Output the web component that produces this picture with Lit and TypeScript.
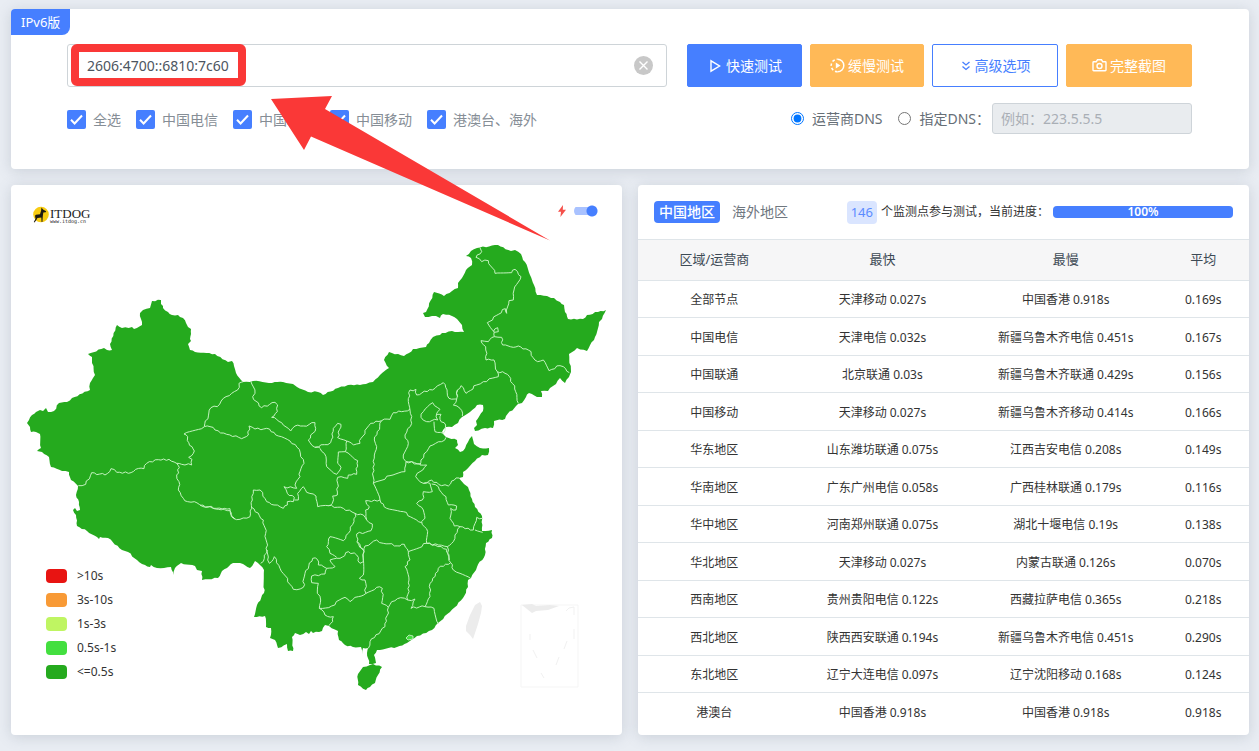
import { LitElement, html, css, svg } from "lit";
import { customElement } from "lit/decorators.js";

const COAST =
  "27,423 29,420 32,415 36,412 40,410 43,411 46,408 48,412 54,411 59,403 67,402 72,398 90,390 90,383 93,378 95,375 92,360 92,357 88,354 104,348 107,350 112,350 110,344 117,325 122,328 132,327 134,329 142,325 140,313 143,310 150,308 152,301 161,300 161,304 163,306 163,308 168,312 172,315 178,315 180,317 183,318 186,323 188,327 191,329 191,334 190,339 191,341 188,344 190,350 195,352 215,354 228,362 232,361 234,366 236,373 243,382 253,381 272,383 283,382 293,384 297,387 308,392 318,392 323,395 338,388 348,385 366,384 373,382 380,375 389,368 384,360 389,352 404,356 409,353 413,349 426,347 429,343 433,337 440,335 442,333 452,331 458,332 464,332 462,325 457,319 452,316 443,314 440,318 436,316 432,316 425,317 423,313 426,312 434,292 444,296 452,291 458,288 458,283 462,278 466,270 472,265 471,258 466,256 471,251 477,248 498,245 511,251 515,250 521,254 523,260 525,262 530,275 534,285 537,295 547,296 551,298 554,298 560,302 564,305 565,312 568,319 583,319 587,315 598,312 606,310 602,319 599,322 595,337 587,351 577,348 569,354 571,372 569,377 565,383 560,378 556,384 550,388 548,391 541,391 542,397 537,397 529,393 526,397 522,403 518,404 506,416 505,419 494,421 493,428 485,428 475,431 474,428 477,425 476,421 483,411 483,405 477,405 470,412 462,417 458,423 452,427 446,427 442,432 446,437 457,440 458,445 455,448 460,452 463,451 468,442 472,436 474,444 480,448 489,448 488,455 482,455 475,461 463,472 463,477 459,478 464,484 468,487 472,499 475,507 482,516 482,531 492,530 492,538 486,543 485,555 477,567 471,578 468,580 468,587 463,598 450,612 438,623 432,630 417,636 407,643 397,647 377,650 374,655 376,663 369,664 367,653 368,648 363,648 362,654 361,647 353,647 345,645 339,640 338,631 329,626 325,625 322,631 313,633 311,631 309,634 306,632 300,635 295,633 292,637 293,651 288,651 287,644 278,648 275,640 270,638 271,628 266,627 265,616 254,617 257,605 264,593 264,570 260,565 255,561 250,568 243,564 240,563 233,563 227,568 222,571 218,578 202,580 202,571 197,570 195,566 181,563 175,568 173,575 171,567 164,568 157,568 151,565 150,567 145,565 142,564 137,560 128,552 122,550 108,538 100,537 99,539 87,531 77,526 76,515 73,510 75,508 77,511 80,510 79,502 76,495 78,486 71,480 69,472 62,471 51,467 49,457 42,452 37,451 41,448 40,434 36,432 31,432 30,427";

const HAINAN = "363,667 370,665 373,664 382,667 378,675 375,683 370,687 366,690 358,685 358,674";

/** Province borders, digitised per map sheet at three units to the pixel. */
const SHEETS: { x: number; y: number; lines: string[] }[] = [
  {
    x: 0, y: 370,
    lines: [
      "235,347 257,343 275,308 315,315 333,296 350,307 385,310 407,298 432,296 440,280 475,269 507,268 530,280 545,283 575,285 576,268 566,262 583,243 576,230 562,212 563,200 552,192 612,171",
      "530,280 538,293 530,315 537,335 535,360 550,385 563,395 583,395 605,408 630,410 655,418 690,416 698,440 705,447",
    ],
  },
  {
    x: 200, y: 360,
    lines: [
      "130,65 117,70 118,82 95,100 70,115 52,140 33,143 13,200",
      "152,63 165,100 158,110 185,143 225,127 233,135 232,155 215,172 245,188 272,213 285,198 310,198 345,188 347,205 325,240 345,262 360,262",
      "345,262 392,248 400,205 413,190 423,193 413,233 440,243 436,275 415,276 413,310 423,322 410,343 380,320 378,290 360,265",
      "436,275 473,302 470,343 445,345 443,355 413,352 412,405 398,408 397,430 385,437",
      "440,243 460,255 480,250 483,235 512,190 545,182 523,240 530,260 523,285 520,370",
      "545,182 570,178 580,158 605,155 630,148",
      "13,200 30,200 45,210 80,223 125,236 145,225 147,198 165,207 200,205 235,228 270,243 298,268 302,290 312,310 300,335 300,350 285,375 290,385 252,380 262,400 283,412 280,425 262,425",
      "283,420 295,420 293,400 310,380 320,397 348,408 353,440 385,437",
      "262,425 262,435 250,445 222,435 200,425 180,390 160,390 157,420 155,445 150,470 120,478 100,475 90,452 50,445 0,436",
      "385,437 430,445 465,460 490,465 500,480 497,450 508,440 497,422 540,420",
      "465,460 462,485 445,520 430,542 390,530 380,560 390,580 410,592",
      "520,370 570,347 615,335 618,305 660,312",
      "520,370 540,420 560,445 610,455 640,475 665,488",
      "500,480 517,492 513,512 470,522 472,545 490,570",
    ],
  },
  {
    x: 380, y: 230,
    lines: [
      "300,53 305,65 288,82 305,95 325,92 345,130 395,128 405,118 423,140 402,180 400,210 387,212 380,250 376,236 322,278 343,305 343,320",
      "340,305 353,293 355,305 343,307",
      "343,320 365,322 368,345 400,352 415,348 445,360 473,395 490,390 507,422 540,407 550,410 568,428",
      "343,320 325,335 303,332 317,350 318,390 342,390 352,425 375,430 392,445 407,485 415,520",
      "352,425 355,440 310,455 290,465 258,490 243,467 232,480 233,500",
    ],
  },
  {
    x: 360, y: 380,
    lines: [
      "150,90 145,65 150,30 168,28 170,45 225,25 250,8 257,22 267,55 290,57 293,30",
      "290,57 280,75 300,85 307,108",
      "150,90 155,130 135,165 145,190 130,235 138,245 180,252",
      "218,68 240,88 230,100 233,120 200,125 183,112 190,95 218,68",
      "230,103 243,103 240,118 257,135 250,160 225,155 222,125",
      "258,172 245,185 210,198 200,215 183,240 180,255 200,255 180,275 167,290 190,310",
      "190,310 215,300 245,317 265,318 275,303 297,294",
      "190,310 210,310 217,335 190,335 187,360 170,370 190,390 195,415 185,425 203,455 200,490 235,495 262,500 268,540",
      "215,312 235,320 258,350 265,375 290,378 288,390 272,385 270,415 283,438 300,440 340,450 350,412 368,415",
      "345,450 368,457",
      "300,440 285,465 280,485 262,500",
    ],
  },
  {
    x: 230, y: 500,
    lines: [
      "65,22 100,60 107,100 113,180 118,190 133,170 150,205 190,268 220,262 225,220 248,175 262,178 265,195 290,205",
      "112,150 103,175 92,190",
      "290,205 285,222 245,228 245,248 265,250 262,280 272,300 268,325",
      "290,205 315,200 300,180 330,175 355,155 380,165 390,190 400,185 402,155 380,125",
      "268,325 305,318 345,292 360,305 385,290 408,280 440,262 457,265 455,310 475,322",
      "268,325 285,345 310,350 308,365 297,377",
      "402,155 400,225 388,235 405,240 408,280",
      "402,155 405,138 440,120 460,130 510,138 523,133 535,155 590,130",
      "475,322 485,305 512,293 533,300 555,297 543,325 585,320 612,325 625,372",
      "535,155 540,180 525,200 537,240 533,300",
      "585,320 600,290 600,250 625,205 662,188 650,148",
      "590,130 615,135 650,148",
      "662,188 670,210 690,220 722,235",
      "475,322 465,380 420,425 415,445",
    ],
  },
];

/** Breaks long segments into short ones with a slight, repeatable wander. */
function meander(line: string, step: number, swing: number): string {
  const pts = line.split(" ").map((p) => p.split(",").map(Number));
  const out: string[] = [pts[0].join(",")];
  for (let i = 1; i < pts.length; i++) {
    const [ax, ay] = pts[i - 1];
    const [bx, by] = pts[i];
    const len = Math.hypot(bx - ax, by - ay);
    const n = Math.max(1, Math.round(len / step));
    for (let k = 1; k < n; k++) {
      const seed = Math.sin(ax * 12.9 + by * 78.2 + k * 37.7) * 43758.5;
      const off = (seed - Math.floor(seed) - 0.5) * swing;
      const t = k / n;
      const x = ax + (bx - ax) * t - ((by - ay) / len) * off;
      const y = ay + (by - ay) * t + ((bx - ax) / len) * off;
      out.push(`${x.toFixed(1)},${y.toFixed(1)}`);
    }
    out.push(`${bx},${by}`);
  }
  return out.join(" ");
}

const ISPS = ["全选", "中国电信", "中国联通", "中国移动", "港澳台、海外"];

const LEGEND = [
  ["red", ">10s"],
  ["orange", "3s-10s"],
  ["lime", "1s-3s"],
  ["light", "0.5s-1s"],
  ["green", "<=0.5s"],
];

const ROWS = [
  ["全部节点", "天津移动 0.027s", "中国香港 0.918s", "0.169s"],
  ["中国电信", "天津电信 0.032s", "新疆乌鲁木齐电信 0.451s", "0.167s"],
  ["中国联通", "北京联通 0.03s", "新疆乌鲁木齐联通 0.429s", "0.156s"],
  ["中国移动", "天津移动 0.027s", "新疆乌鲁木齐移动 0.414s", "0.166s"],
  ["华东地区", "山东潍坊联通 0.075s", "江西吉安电信 0.208s", "0.149s"],
  ["华南地区", "广东广州电信 0.058s", "广西桂林联通 0.179s", "0.116s"],
  ["华中地区", "河南郑州联通 0.075s", "湖北十堰电信 0.19s", "0.138s"],
  ["华北地区", "天津移动 0.027s", "内蒙古联通 0.126s", "0.070s"],
  ["西南地区", "贵州贵阳电信 0.122s", "西藏拉萨电信 0.365s", "0.218s"],
  ["西北地区", "陕西西安联通 0.194s", "新疆乌鲁木齐电信 0.451s", "0.290s"],
  ["东北地区", "辽宁大连电信 0.097s", "辽宁沈阳移动 0.168s", "0.124s"],
  ["港澳台", "中国香港 0.918s", "中国香港 0.918s", "0.918s"],
];

@customElement("app-root")
export class AppRoot extends LitElement {
  static styles = css`
    * { box-sizing: border-box; }
    :host {
      display: block;
      position: relative;
      min-height: 100vh;
      overflow: hidden;
      padding: 9px 10px 16px 11px;
      background: #e9edf3;
      color: #333;
      font-family: "Noto Sans", "Noto Sans CJK SC", sans-serif;
      font-size: 14px;
      line-height: 20px;
    }
    button, input { font: inherit; margin: 0; }
    .card {
      position: relative;
      min-width: 0;
      background: #fff;
      border-radius: 4px;
      box-shadow: 0 2px 14px rgba(90, 105, 125, 0.22);
    }
    .query { padding: 35px 57px 35px 56px; margin-bottom: 16px; }
    .version {
      position: absolute;
      left: 0;
      top: 0;
      padding: 3px 10px;
      background: #467fff;
      color: #fff;
      font-size: 13px;
      border-radius: 4px 0 8px 0;
    }
    .form {
      display: grid;
      grid-template-columns: 600fr 505fr;
      column-gap: 20px;
      row-gap: 16px;
      align-items: center;
    }
    .host-field { position: relative; display: flex; }
    .host-input {
      width: 100%;
      height: 43px;
      padding: 0 50px 0 19px;
      border: 1px solid #ced4d8;
      border-radius: 3px;
      color: #4c5560;
      outline: none;
    }
    .clear {
      position: absolute;
      right: 14px;
      top: 12px;
      width: 19px;
      height: 19px;
      padding: 0;
      border: 0;
      background: none;
    }
    .clear svg { display: block; }
    .mark-box {
      position: absolute;
      left: 4px;
      top: 0;
      width: 175px;
      height: 42px;
      border: 8px solid #fa3837;
      border-radius: 6px;
      pointer-events: none;
    }
    .actions { display: grid; grid-template-columns: 115fr 114fr 126fr 126fr; gap: 8px; }
    .btn {
      display: flex;
      align-items: center;
      justify-content: center;
      gap: 3px;
      height: 43px;
      padding: 0;
      border: 1px solid #467fff;
      border-radius: 2px;
      background: #467fff;
      color: #fff;
      white-space: nowrap;
    }
    .amber { background: #ffb957; border-color: #ffb957; }
    .outline { background: #fff; color: #467fff; }
    .checks, .dns { display: flex; align-items: center; }
    .checks { gap: 15px; padding-top: 2px; }
    .check { display: flex; align-items: center; gap: 7px; color: #868e96; white-space: nowrap; }
    .check input {
      appearance: none;
      width: 19px;
      height: 19px;
      border-radius: 2px;
      background: #467fff url("data:image/svg+xml,%3Csvg xmlns='http://www.w3.org/2000/svg' viewBox='0 0 19 19'%3E%3Cpath d='M4 9.8l3.6 3.7L15 5.5' fill='none' stroke='white' stroke-width='2'/%3E%3C/svg%3E");
    }
    .dns { justify-content: flex-end; gap: 16px; color: #666e76; }
    .dns-choice { display: flex; align-items: center; gap: 8px; white-space: nowrap; }
    .dns-choice input { width: 13px; height: 13px; }
    .dns-custom { display: flex; align-items: center; gap: 2px; }
    .dns-input {
      width: 200px;
      height: 31px;
      padding: 0 8px;
      border: 1px solid #ced4d9;
      border-radius: 3px;
      background: #e9ecef;
    }
    .dns-input::placeholder { color: #a9afb6; opacity: 1; }
    .panels { display: grid; grid-template-columns: 1fr 1fr; gap: 16px; }
    .map { display: block; width: 100%; height: auto; }
    .brand { position: absolute; left: 22px; top: 21px; display: flex; gap: 1px; color: #222; }
    .brand-text {
      display: flex;
      flex-direction: column;
      padding-top: 2px;
      font: 13px/11px "Liberation Serif", serif;
    }
    .brand-url { font: 5px/5px "DejaVu Sans Mono", monospace; }
    .speed { position: absolute; right: 23px; top: 20px; display: flex; align-items: center; gap: 8px; }
    .switch {
      appearance: none;
      width: 25px;
      height: 12px;
      background:
        radial-gradient(circle at 18px 6px, #467fff 5px, transparent 6px),
        linear-gradient(#a9c2ff, #a9c2ff) 0 2px / 22px 8px no-repeat;
      border-radius: 6px;
    }
    .legend {
      position: absolute;
      left: 35px;
      bottom: 51px;
      margin: 0;
      padding: 0;
      list-style: none;
      font-size: 12px;
      line-height: 24px;
    }
    .legend li { display: flex; align-items: center; gap: 10px; }
    .swatch { width: 21px; height: 14px; border-radius: 4px; }
    .red { background: #e81412; }
    .orange { background: #f89a36; }
    .lime { background: #bff562; }
    .light { background: #43df3f; }
    .green { background: #25aa1e; }
    .toolbar { display: flex; align-items: center; height: 54px; padding: 0 16px; font-size: 12px; white-space: nowrap; }
    .tab {
      height: 22px;
      margin-right: 7px;
      padding: 0 5px;
      border: 0;
      border-radius: 4px;
      background: none;
      color: #6f777f;
      font-size: 14px;
      line-height: 20px;
    }
    .active { background: #467fff; color: #fff; font-weight: 500; }
    .count {
      margin: 0 4px 0 auto;
      padding: 1px 4px 2px;
      border-radius: 4px;
      background: #dae5ff;
      color: #5a8bff;
      font-size: 13px;
    }
    .track { width: 180px; margin-left: 4px; border-radius: 4px; background: #e9ecef; }
    .fill {
      height: 12px;
      border-radius: 4px;
      background: #467fff;
      color: #fff;
      font-weight: 600;
      line-height: 12px;
      text-align: center;
    }
    table { width: 100%; table-layout: fixed; border-collapse: separate; border-spacing: 0; text-align: center; }
    th {
      height: 42px;
      padding: 0 0 2px;
      border: solid #dfe5e9;
      border-width: 1px 0;
      background: #f6f6f7;
      color: #3d4a55;
      font-size: 13px;
      font-weight: 400;
    }
    td { height: 37px; padding: 2px 0 0; border-bottom: 1px solid #dfe5e9; font-size: 12px; white-space: nowrap; }
    tr:nth-child(even) td { height: 38px; }
    tr:last-child td { border-bottom: 0; }
    .c1 { width: 25%; }
    .c2 { width: 30%; }
    .c3 { width: 30%; }
    .c4 { width: 15%; }
    .arrow { position: absolute; left: 271px; top: 96px; pointer-events: none; }
  `;

  private renderMap() {
    return svg`<svg class="map" viewBox="11 185 611 550" role="img" aria-label="中国地图">
      <polygon points=${meander(COAST, 3, 1.4)} fill="#25aa1e"></polygon>
      <polygon points=${meander(HAINAN, 3, 1.4)} fill="#25aa1e"></polygon>
      ${SHEETS.map(
        (s) => svg`<g transform="translate(${s.x} ${s.y}) scale(.33333)" fill="none"
          stroke="#c4f3c0" stroke-width="3" stroke-linejoin="round">
          ${s.lines.map((l) => svg`<polyline points=${meander(l, 9, 7)}></polyline>`)}
        </g>`
      )}
      <path d="M406 638l3-3 4 1v3l-5 1z" fill="#43df3f" stroke="#d5f7d2" stroke-width=".8"></path>
      <path d="M480 602l2 4-1 7-3 11-5 15-3-4-4-4v-5l4-11 5-10z" fill="#ececec"></path>
      <path d="M521 605h57v82h-57z" fill="none" stroke="#f5f5f5"></path>
      <path d="M522 605l10 8 4-2 12-1 11-4-9-1-14 1-4-2z" fill="#ececec"></path>
      <path d="M566 611l3-3 5-1v8M574 629v10M567 641l-3 8M559 657l-3 8M541 673l3 5M533 650l4 8M530 634v6" fill="none" stroke="#f1f1f1"></path>
    </svg>`;
  }

  render() {
    return html`
      <section class="card query">
        <span class="version">IPv6版</span>
        <div class="form">
          <div class="host-field">
            <input class="host-input" type="text" aria-label="测试地址" .value=${"2606:4700::6810:7c60"} />
            <button class="clear" aria-label="清除">
              <svg width="19" height="19" viewBox="0 0 19 19">
                <circle cx="9.5" cy="9.5" r="9.5" fill="#c8c8c8"></circle>
                <path d="M5.5 5.5l8 8m0-8l-8 8" stroke="#fff" stroke-width="1.4"></path>
              </svg>
            </button>
            <div class="mark-box"></div>
          </div>
          <div class="actions">
            <button class="btn">
              <svg width="16" height="16" viewBox="0 0 16 16" fill="none" stroke="currentColor" stroke-width="1.4"><path d="M4 2.8v10.4L12.6 8z"></path></svg>
              <span>快速测试</span>
            </button>
            <button class="btn amber">
              <svg width="15" height="15" viewBox="0 0 15 15" fill="none" stroke="currentColor" stroke-width="1.5">
                <path d="M7.5 1.2a6.3 6.3 0 0 1 0 12.6"></path>
                <path d="M7.5 13.8a6.3 6.3 0 0 1 0-12.6" stroke-dasharray="2.6 2"></path>
                <path d="M5.8 4.5v6l4.6-3z" fill="currentColor" stroke="none"></path>
              </svg>
              <span>缓慢测试</span>
            </button>
            <button class="btn outline">
              <svg width="12" height="16" viewBox="2 0 12 16" fill="none" stroke="currentColor" stroke-width="1.3"><path d="M4.5 4L8 7l3.5-3M4.5 8.500L8 11.500l3.500-3"></path></svg>
              <span>高级选项</span>
            </button>
            <button class="btn amber">
              <svg width="15" height="15" viewBox="0 0 15 15" fill="none" stroke="currentColor" stroke-width="1.4">
                <path d="M1.7 3.7h2.6l1.2-1.9h4l1.2 1.9h2.6q.7 0 .7.7v7.7q0 .7-.7.7H1.7q-.7 0-.7-.7V4.4q0-.7.7-.7z"></path>
                <circle cx="7.5" cy="8" r="2.5"></circle>
              </svg>
              <span>完整截图</span>
            </button>
          </div>
          <div class="checks">
            ${ISPS.map((n) => html`<label class="check"><input type="checkbox" checked />${n}</label>`)}
          </div>
          <div class="dns">
            <label class="dns-choice"><input type="radio" name="dns" checked />运营商DNS</label>
            <div class="dns-custom">
              <label class="dns-choice"><input type="radio" name="dns" />指定DNS：</label>
              <input class="dns-input" type="text" aria-label="指定DNS" placeholder="例如：223.5.5.5" disabled />
            </div>
          </div>
        </div>
      </section>

      <div class="panels">
        <section class="card">
          ${this.renderMap()}
          <div class="brand">
            <svg width="16" height="17" viewBox="0 0 16 17">
              <circle cx="8" cy="8.5" r="7.8" fill="#f8cc12"></circle>
              <path d="M8.5 1.5l1.5 2 3.2 1.7-.5 1-2.400.4-.5 3.600-.4 5.800H8.600l-.3-4.400-3.900.3-1 2.200L1.500 16.500.8 16l1.700-3.300-.5-3 .9-.9L7 8.300l1-3.200z" fill="#1d1a12"></path>
            </svg>
            <div class="brand-text"><span>ITDOG</span><span class="brand-url">www.itdog.cn</span></div>
          </div>
          <div class="speed">
            <svg width="8" height="12" viewBox="0 0 8 12"><path d="M5 0L0 6.7h3L2.4 12 8 4.8H4.8z" fill="#f5504a"></path></svg>
            <input class="switch" type="checkbox" role="switch" aria-label="快速模式" checked />
          </div>
          <ul class="legend">
            ${LEGEND.map(([c, t]) => html`<li><span class="swatch ${c}"></span>${t}</li>`)}
          </ul>
        </section>

        <section class="card">
          <div class="toolbar">
            <button class="tab active">中国地区</button>
            <button class="tab">海外地区</button>
            <span class="count">146</span>
            <span>个监测点参与测试，当前进度：</span>
            <div class="track"><div class="fill">100%</div></div>
          </div>
          <table>
            <colgroup><col class="c1" /><col class="c2" /><col class="c3" /><col class="c4" /></colgroup>
            <thead>
              <tr><th>区域/运营商</th><th>最快</th><th>最慢</th><th>平均</th></tr>
            </thead>
            <tbody>
              ${ROWS.map((r) => html`<tr>${r.map((c) => html`<td>${c}</td>`)}</tr>`)}
            </tbody>
          </table>
        </section>
      </div>

      <svg class="arrow" width="280" height="146" viewBox="271 96 280 146" aria-hidden="true">
        <path d="M271 99L332 96 325 109 550 240.5 311 136.5 304 150z" fill="#fa3837"></path>
      </svg>
    `;
  }
}
